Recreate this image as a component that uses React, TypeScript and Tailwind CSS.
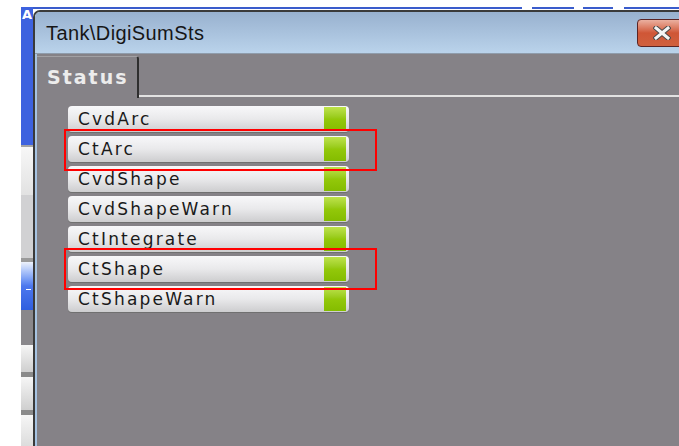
import React from 'react'

const signals = ['CvdArc', 'CtArc', 'CvdShape', 'CvdShapeWarn', 'CtIntegrate', 'CtShape', 'CtShapeWarn']

// rows that carry a red marker frame
const marked = [
  { top: 'top-[129px]' },
  { top: 'top-[248px]' },
]

const CloseGlyph: React.FC = () => (
  <svg width="18" height="14" viewBox="0 0 18 14">
    <path d="M3 2 L15 12 M15 2 L3 12" stroke="#4a4a4a" strokeWidth="5" strokeLinecap="square" />
    <path d="M3 2 L15 12 M15 2 L3 12" stroke="#f4f4f4" strokeWidth="3" strokeLinecap="square" />
  </svg>
)

const SideStrip: React.FC = () => (
  <div className="flex w-[12px] flex-col">
    <div className="h-[7px] bg-white" />
    <div className="relative h-[138px] bg-[#3d62df]">
      <span className="absolute left-[1px] top-[1px] text-[13px] font-bold leading-none text-white [font-family:'DejaVu_Sans',sans-serif]">A</span>
    </div>
    <div className="h-[2px] bg-[#a3a3a3]" />
    <div className="h-[48px] bg-linear-to-b from-[#f7f7f7] to-[#e2e2e2]" />
    <div className="h-[63px] bg-[#d1d1d3]" />
    <div className="h-[4px] bg-[#9a9a9a]" />
    <div className="relative h-[48px] bg-linear-to-b from-[#eef2fb] via-[#4d78ee] to-[#2f5edf]">
      <div className="absolute left-[5px] top-[27px] h-[1px] w-[5px] bg-white" />
    </div>
    <div className="h-[35px] bg-[#89878b]" />
    <div className="h-[27px] bg-linear-to-b from-[#f6f6f6] to-[#cfcfcf]" />
    <div className="h-[5px] bg-[#8a8a8a]" />
    <div className="h-[33px] bg-linear-to-b from-[#f6f6f6] to-[#cfcfcf]" />
    <div className="h-[5px] bg-[#8a8a8a]" />
    <div className="flex-1 bg-linear-to-b from-[#f6f6f6] to-[#dcdcdc]" />
  </div>
)

const SignalRow: React.FC<{ name: string }> = ({ name }) => (
  <div className="flex h-[26px] w-[281px] items-center justify-between rounded-[4px] bg-linear-to-b from-[#f8f8fa] via-[#e9e9eb] to-[#cdcdcf] pl-[10px] pr-[3px] shadow-[0_1px_0_#707070]">
    <span className="text-[17px] leading-none tracking-[2.2px] text-[#1a1a1a] [font-family:'DejaVu_Sans',sans-serif]">
      {name}
    </span>
    <div className="h-[24px] w-[22px] bg-linear-to-b from-[#bfe34a] via-[#93c80a] to-[#84bc00]" />
  </div>
)

export default function App() {
  return (
    <div className="relative flex h-[446px] w-[679px] overflow-hidden bg-white">
      <div className="w-[21px] bg-white" />
      <SideStrip />

      <div className="flex flex-1 flex-col">
        {/* taskbar edge above the window */}
        <div className="h-[7px] bg-white" />
        <div className="flex h-[2px]">
          <div className="w-[489px] bg-[#3a5ccc]" />
          <div className="w-[10px] bg-white" />
          <div className="w-[42px] bg-[#3a5ccc]" />
          <div className="w-[9px] bg-white" />
          <div className="w-[30px] bg-[#3a5ccc]" />
          <div className="w-[11px] bg-white" />
          <div className="flex-1 bg-[#3a5ccc]" />
        </div>
        <div className="h-[1px] bg-white" />

        {/* window */}
        <div className="flex flex-1 flex-col overflow-hidden rounded-tl-[7px] border-l-2 border-t-2 border-[#3a3a3a]">
          <div className="flex h-[42px] items-center justify-between border-b border-[#8f9cab] bg-linear-to-b from-[#98b1cf] to-[#bad3eb] pl-[11px]">
            <span className="text-[20px] leading-none tracking-[0.4px] text-[#161616] [font-family:'Liberation_Sans',sans-serif]">
              Tank\DigiSumSts
            </span>
            <div className="-mr-[4px] flex h-[28px] w-[46px] items-center justify-start rounded-[4px] border border-[#5b2424] bg-linear-to-b from-[#eab0a0] via-[#cf5636] to-[#d0603e] pl-[15px]">
              <CloseGlyph />
            </div>
          </div>

          <div className="flex flex-1 border-l-2 border-[#a6c3e2] bg-[#858287]">
            <div className="flex flex-1 flex-col">
              {/* tab header */}
              <div className="flex h-[44px] items-end pt-[2px]">
                <div className="flex h-full w-[102px] items-center rounded-tr-[3px] border-r-2 border-t border-[#2e2e2e] border-t-[#a2a1a4] pl-[10px]">
                  <span className="text-[19px] font-bold leading-none tracking-[2px] text-[#ececec] [font-family:'DejaVu_Sans',sans-serif]">
                    Status
                  </span>
                </div>
                <div className="mb-[1px] h-[2px] flex-1 bg-[#e2e2e2]" />
              </div>

              {/* signal list */}
              <div className="flex flex-col gap-[4px] pl-[31px] pt-[8px]">
                {signals.map((s) => (
                  <SignalRow key={s} name={s} />
                ))}
              </div>
            </div>
          </div>
        </div>
      </div>

      {marked.map((m, i) => (
        <div
          key={i}
          className={`pointer-events-none absolute left-[64px] h-[42px] w-[313px] border-2 border-[#ff0000] ${m.top}`}
        />
      ))}
    </div>
  )
}
